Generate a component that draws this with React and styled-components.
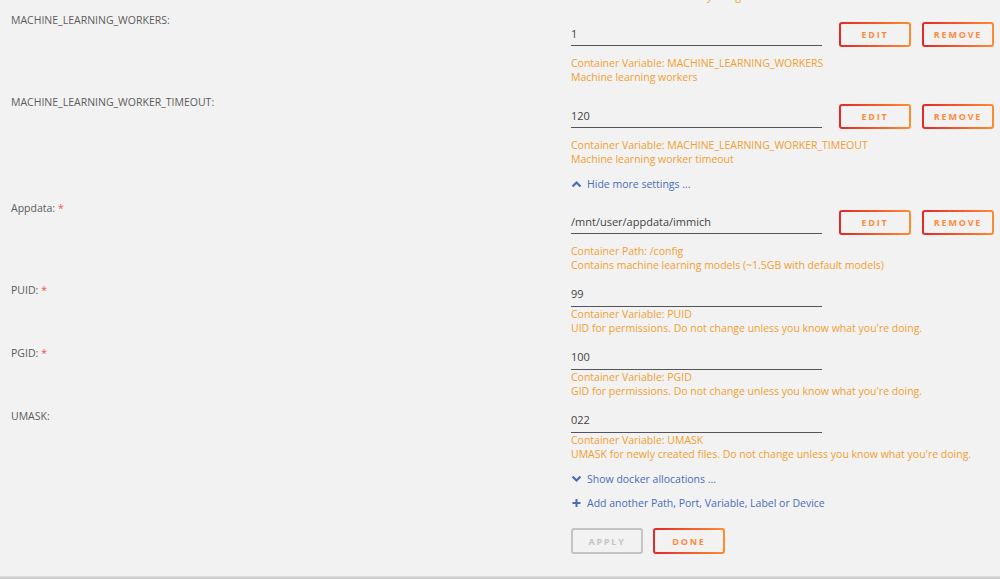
import React from 'react'
import styled, { createGlobalStyle } from 'styled-components'

const GlobalStyle = createGlobalStyle`
    html, body {
        margin: 0;
        padding: 0;
        background: #f2f2f2;
    }
    body {
        font-family: 'Open Sans', 'Noto Sans', sans-serif;
        font-size: 10.5px;
        color: #606060;
    }
`

const Page = styled.div`
    width: 1000px;
    height: 579px;
    overflow: hidden;
    display: flex;
    flex-direction: column;
    background: #f2f2f2;
`

const Form = styled.div`
    flex: 1;
    padding-left: 11px;
`

const Row = styled.div`
    display: grid;
    grid-template-columns: 560px 1fr;
    padding-bottom: ${p => (p.$tight ? 0 : 11)}px;
`

const Tail = styled(Row)`
    margin-top: -11px;
    padding-bottom: 10px;
`

const Label = styled.div`
    line-height: 14px;
    color: #5c5c5c;
`

const Required = styled.span`
    color: #ef5350;
    margin-left: 3px;
`

const Field = styled.div`
    display: flex;
    flex-direction: column;
`

const InputLine = styled.div`
    display: flex;
    align-items: flex-start;
    margin-top: 9px;
    margin-bottom: 9px;
`

const Input = styled.div`
    box-sizing: border-box;
    width: 251px;
    height: 24px;
    padding-top: ${p => (p.$spaced ? 5 : 4)}px;
    line-height: 14px;
    font-size: 11px;
    color: #444;
    border-bottom: 1px solid #555;
    margin-right: ${p => (p.$spaced ? 17 : 0)}px;
`

const Desc = styled.div`
    line-height: 14px;
    color: #f0a030;
`

const Btn = styled.button`
    box-sizing: border-box;
    width: 72px;
    height: ${p => (p.$tall ? 26 : 25)}px;
    margin-right: ${p => (p.$gap ? 10 : 11)}px;
    padding: 0;
    border: 2px solid transparent;
    border-radius: 3px;
    background:
        linear-gradient(#f2f2f2, #f2f2f2) padding-box,
        ${p => (p.$disabled
            ? 'linear-gradient(90deg, #c4c4c4, #c4c4c4)'
            : 'linear-gradient(90deg, #e22828, #ff8c2f)')} border-box;
    color: ${p => (p.$disabled ? '#c4c4c4' : '#fd8a3c')};
    font-family: 'Open Sans', sans-serif;
    font-size: 9px;
    font-weight: 700;
    letter-spacing: 1.8px;
    cursor: pointer;
`

const LinkLine = styled.div`
    display: flex;
    align-items: center;
    gap: 5px;
    line-height: 14px;
    color: #486dba;
    margin-bottom: ${p => p.$mb || 0}px;
    svg {
        flex: none;
    }
`

const Actions = styled.div`
    display: flex;
    margin-top: 18px;
`

const Footer = styled.div`
    height: 2px;
    border-top: 1px solid #dcdcdc;
    background: #cfcfcf;
`

const ChevronUp = () => (
    <svg width="11" height="8" viewBox="0 0 11 8">
        <polyline points="1.5,6.5 5.5,2.5 9.5,6.5" fill="none" stroke="#486dba" strokeWidth="2.2" />
    </svg>
)

const ChevronDown = () => (
    <svg width="11" height="8" viewBox="0 0 11 8">
        <polyline points="1.5,1.5 5.5,5.5 9.5,1.5" fill="none" stroke="#486dba" strokeWidth="2.2" />
    </svg>
)

const Plus = () => (
    <svg width="11" height="10" viewBox="0 0 11 10">
        <path d="M5.5 1 V9 M1.5 5 H9.5" fill="none" stroke="#486dba" strokeWidth="2" />
    </svg>
)

function ButtonField({ value, lines }) {
    return (
        <Field>
            <InputLine>
                <Input $spaced>{value}</Input>
                <Btn>EDIT</Btn>
                <Btn>REMOVE</Btn>
            </InputLine>
            {lines.map(l => <Desc key={l}>{l}</Desc>)}
        </Field>
    )
}

function PlainField({ value, lines }) {
    return (
        <Field>
            <Input>{value}</Input>
            {lines.map(l => <Desc key={l}>{l}</Desc>)}
        </Field>
    )
}

export default function App() {
    return (
        <Page>
            <GlobalStyle />
            <Form>
                <Tail>
                    <div />
                    <Desc>Seconds to wait before every idle gunicorn worker is killed</Desc>
                </Tail>
                <Row>
                    <Label>MACHINE_LEARNING_WORKERS:</Label>
                    <ButtonField value="1" lines={['Container Variable: MACHINE_LEARNING_WORKERS', 'Machine learning workers']} />
                </Row>
                <Row>
                    <Label>MACHINE_LEARNING_WORKER_TIMEOUT:</Label>
                    <ButtonField value="120" lines={['Container Variable: MACHINE_LEARNING_WORKER_TIMEOUT', 'Machine learning worker timeout']} />
                </Row>
                <Row $tight>
                    <div />
                    <LinkLine $mb={10}><ChevronUp />Hide more settings ...</LinkLine>
                </Row>
                <Row>
                    <Label>Appdata:<Required>*</Required></Label>
                    <ButtonField value="/mnt/user/appdata/immich" lines={['Container Path: /config', 'Contains machine learning models (~1.5GB with default models)']} />
                </Row>
                <Row>
                    <Label>PUID:<Required>*</Required></Label>
                    <PlainField value="99" lines={['Container Variable: PUID', "UID for permissions. Do not change unless you know what you're doing."]} />
                </Row>
                <Row>
                    <Label>PGID:<Required>*</Required></Label>
                    <PlainField value="100" lines={['Container Variable: PGID', "GID for permissions. Do not change unless you know what you're doing."]} />
                </Row>
                <Row>
                    <Label>UMASK:</Label>
                    <PlainField value="022" lines={['Container Variable: UMASK', "UMASK for newly created files. Do not change unless you know what you're doing."]} />
                </Row>
                <Row $tight>
                    <div />
                    <Field>
                        <LinkLine $mb={10}><ChevronDown />Show docker allocations ...</LinkLine>
                        <LinkLine><Plus />Add another Path, Port, Variable, Label or Device</LinkLine>
                        <Actions>
                            <Btn $tall $gap $disabled>APPLY</Btn>
                            <Btn $tall>DONE</Btn>
                        </Actions>
                    </Field>
                </Row>
            </Form>
            <Footer />
        </Page>
    )
}
